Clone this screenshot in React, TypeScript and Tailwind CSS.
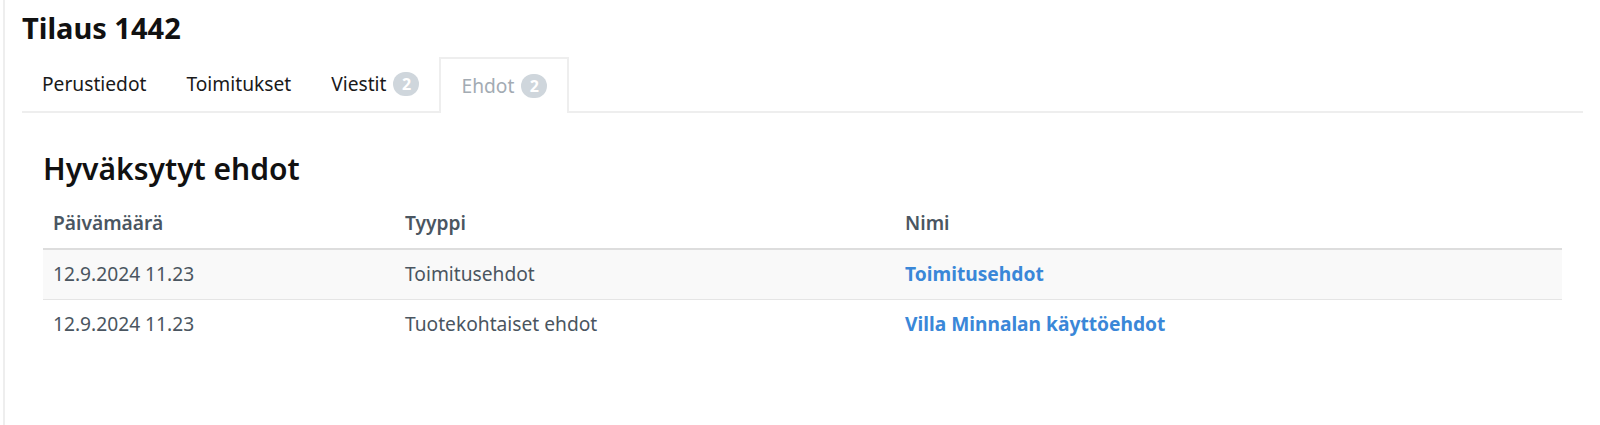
import React from 'react';

interface Tab {
  label: string;
  count?: number;
  active?: boolean;
}

const tabs: Tab[] = [
  { label: 'Perustiedot' },
  { label: 'Toimitukset' },
  { label: 'Viestit', count: 2 },
  { label: 'Ehdot', count: 2, active: true },
];

const terms = [
  { date: '12.9.2024 11.23', type: 'Toimitusehdot', name: 'Toimitusehdot' },
  { date: '12.9.2024 11.23', type: 'Tuotekohtaiset ehdot', name: 'Villa Minnalan käyttöehdot' },
];

export default function App() {
  return (
    <div
      className="min-h-screen bg-white"
      style={{ fontFamily: '"Noto Sans", "Open Sans", sans-serif' }}
    >
      <div className="ml-[3px] min-h-screen border-l-2 border-[#eeeeee] px-[17px] pt-[10px]">
        <h1 className="text-[29px] font-bold leading-[35px] text-[#111]">Tilaus 1442</h1>

        <div className="mt-[12px] flex border-b-2 border-[#eeeeee]">
          {tabs.map((tab) => (
            <div
              key={tab.label}
              className={
                tab.active
                  ? '-mb-[2px] flex h-[56px] items-center gap-[7px] border-2 border-b-0 border-[#eeeeee] bg-white px-[20px] text-[19.2px] text-[#a3abb3]'
                  : 'flex h-[54px] items-center gap-[7px] px-5 text-[19.2px] text-[#1a1a1a]'
              }
            >
              <span>{tab.label}</span>
              {tab.count !== undefined && (
                <span className="flex h-[24px] w-[26px] items-center justify-center rounded-full bg-[#cfd6dc] text-[16px] font-bold text-white">
                  {tab.count}
                </span>
              )}
            </div>
          ))}
        </div>

        <div className="px-[21px] pt-[38px]">
          <h2 className="text-[30px] font-semibold leading-[36px] text-[#111]">Hyväksytyt ehdot</h2>

          <table className="mt-[12px] w-full border-collapse text-[19.2px]">
            <thead>
              <tr className="border-b-2 border-[#dddddd] text-left">
                <th className="h-[50px] w-[352px] px-[10px] font-semibold text-[#4a5661]">Päivämäärä</th>
                <th className="h-[50px] w-[500px] px-[10px] font-semibold text-[#4a5661]">Tyyppi</th>
                <th className="h-[50px] px-[10px] font-semibold text-[#4a5661]">Nimi</th>
              </tr>
            </thead>
            <tbody>
              {terms.map((row, i) => (
                <tr
                  key={row.name}
                  className={i === 0 ? 'border-b border-[#e5e5e5] bg-[#f9f9f9]' : ''}
                >
                  <td className="h-[50px] px-[10px] text-[#4a5560]">{row.date}</td>
                  <td className="h-[50px] px-[10px] text-[#4a5560]">{row.type}</td>
                  <td className="h-[50px] px-[10px]">
                    <a href="#" className="font-bold text-[#3a87d8]">
                      {row.name}
                    </a>
                  </td>
                </tr>
              ))}
            </tbody>
          </table>
        </div>
      </div>
    </div>
  );
}
